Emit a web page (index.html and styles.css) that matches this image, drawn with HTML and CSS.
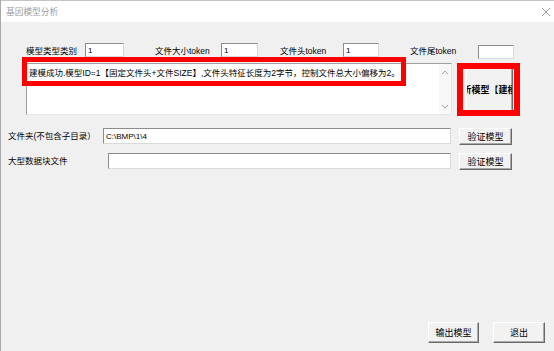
FILE: index.html
```html
<!DOCTYPE html>
<html lang="zh-CN">

<head>
    <meta charset="UTF-8">
    <meta name="viewport" content="width=device-width, initial-scale=1.0">
    <title>基因模型分析</title>
    <link rel="stylesheet" href="styles.css">
</head>

<body>
    <div class="window">
        <div class="titlebar">
            <span class="title">基因模型分析</span>
            <svg class="close" width="10" height="10" viewBox="0 0 10 10">
                <path d="M1 1L9 9M9 1L1 9" stroke="#a0a0a0" stroke-width="1" fill="none" />
            </svg>
        </div>

        <div class="client">
            <!-- 参数 -->
            <div class="params">
                <div class="field f1"><label class="l1">模型类型类别</label><input class="box w1" value="1"></div>
                <div class="field f2"><label class="l2">文件大小token</label><input class="box w2" value="1"></div>
                <div class="field f3"><label class="l3">文件头token</label><input class="box w3" value="1"></div>
                <div class="field f4"><label class="l4">文件尾token</label><input class="box w4 low" value=""></div>
            </div>

            <!-- 建模结果 -->
            <div class="output">
                <div class="memo">
                    <div class="memo_text">建模成功.模型ID=1【固定文件头+文件SIZE】,文件头特征长度为2字节，控制文件总大小偏移为2。</div>
                    <div class="scrollbar">
                        <svg width="8" height="5" viewBox="0 0 8 5"><path d="M1 4L4 1L7 4" stroke="#a6a6a6" fill="none" /></svg>
                        <svg width="8" height="5" viewBox="0 0 8 5"><path d="M1 1L4 4L7 1" stroke="#a6a6a6" fill="none" /></svg>
                    </div>
                </div>
                <button class="btn btn_build"><span>分析模型【建模】</span></button>
            </div>

            <div class="path_row first">
                <label class="row_label rl1">文件夹(不包含子目录）</label>
                <input class="box path" value="C:\BMP\1\4">
                <button class="btn btn_check">验证模型</button>
            </div>
            <div class="path_row second">
                <label class="row_label rl2">大型数据块文件</label>
                <input class="box path" value="">
                <button class="btn btn_check">验证模型</button>
            </div>

            <div class="footer">
                <button class="btn btn_out">输出模型</button>
                <button class="btn btn_exit">退出</button>
            </div>
        </div>

        <!-- 标注框 -->
        <div class="mark mark_text"></div>
        <div class="mark mark_btn"></div>
    </div>
</body>

</html>
```

FILE: styles.css
```css
* {
    padding: 0;
    margin: 0;
    box-sizing: border-box;
}

body {
    background: #f0f0f0;
    font-family: "Liberation Sans", "Noto Sans CJK SC", sans-serif;
    font-size: 9px;
    color: #000;
}

.window {
    width: 554px;
    height: 351px;
    position: relative;
    overflow: hidden;
    border-left: 1px solid #a9a9a9;
    background: #f0f0f0;
}

.titlebar {
    height: 22px;
    background: #fff;
    border-top: 1px solid #c4c4c4;
    display: flex;
    align-items: center;
    padding-left: 5px;
    padding-right: 3px;
}

.title {
    font-size: 8.7px;
    color: #9c9c9c;
    flex: 1;
}

.close {
    display: block;
}

.client {
    height: 329px;
    display: flex;
    flex-direction: column;
}

/* 参数 */
.params {
    height: 14px;
    margin-top: 21px;
    padding-left: 25px;
    display: flex;
    align-items: flex-start;
}

.field {
    display: flex;
    align-items: center;
    height: 14px;
}

.field label {
    font-size: 8.5px;
    white-space: nowrap;
}

.l1 { width: 59px; }
.l2 { width: 66px; }
.l3 { width: 63px; }
.l4 { width: 68px; }

.f2 { margin-left: 31px; }
.f3 { margin-left: 22px; }
.f4 { margin-left: 31px; }

.box {
    height: 14px;
    background: #fff;
    border: 1px solid;
    border-color: #8c8c8c #dadada #dadada #8c8c8c;
    font-family: "Liberation Sans", "Noto Sans CJK SC", sans-serif;
    font-size: 8px;
    padding-left: 2px;
    outline: none;
    color: #000;
}

.w1 { width: 39px; }
.w2 { width: 37px; }
.w3 { width: 36px; }
.w4 { width: 36px; }

.low {
    margin-top: 4px;
}

/* 建模结果 */
.output {
    display: flex;
    align-items: flex-start;
    margin-top: 6px;
    padding-left: 25px;
}

.memo {
    width: 426px;
    height: 52px;
    background: #fff;
    border: 1px solid;
    border-color: #a0a0a0 #e6e6e6 #e6e6e6 #a0a0a0;
    display: flex;
}

.memo_text {
    flex: 1;
    padding: 3px 0 0 2px;
    line-height: 12px;
    font-size: 8.5px;
    white-space: nowrap;
    overflow: hidden;
}

.scrollbar {
    width: 12px;
    background: #f8f8f8;
    display: flex;
    flex-direction: column;
    justify-content: space-between;
    align-items: center;
    padding: 6px 0 5px;
}

.scrollbar svg {
    display: block;
}

.btn {
    background: #f2f2f2;
    border: 1px solid;
    border-color: #fff #6a6a6a #6a6a6a #fff;
    box-shadow: inset -1px -1px 0 #a9a9a9;
    font-family: "Liberation Sans", "Noto Sans CJK SC", sans-serif;
    font-size: 9px;
    color: #000;
}

.btn_build {
    width: 47px;
    height: 48px;
    margin-top: 2px;
    margin-left: 14px;
    display: flex;
    justify-content: center;
    align-items: center;
    overflow: hidden;
    white-space: nowrap;
    font-weight: bold;
}

.path_row {
    display: flex;
    align-items: flex-start;
    padding-left: 7px;
    padding-right: 42px;
}

.path_row.first { margin-top: 13px; }
.path_row.second { margin-top: 8px; }

.row_label {
    height: 16px;
    line-height: 16px;
    font-size: 8.5px;
    white-space: nowrap;
}

.rl1 { width: 95px; }
.rl2 { width: 100px; }

.path {
    flex: 1;
    height: 16px;
}

.btn_check {
    width: 53px;
    height: 17px;
    margin-left: 8px;
}

.footer {
    margin-top: auto;
    display: flex;
    justify-content: flex-end;
    gap: 14px;
    padding: 0 9px 8px 0;
}

.btn_out {
    width: 51px;
    height: 21px;
}

.btn_exit {
    width: 52px;
    height: 21px;
}

/* 红色标注框 */
.mark {
    position: absolute;
    border: 5px solid #ff0000;
}

.mark_text {
    left: 21px;
    top: 57px;
    width: 384px;
    height: 29px;
}

.mark_btn {
    left: 456px;
    top: 63px;
    width: 63px;
    height: 53px;
    border-width: 6px;
}
```
